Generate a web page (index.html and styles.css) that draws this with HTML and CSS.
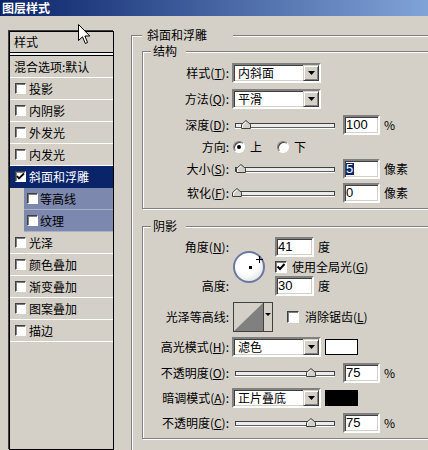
FILE: index.html
```html
<!DOCTYPE html>
<html lang="zh-CN">
<head>
<meta charset="utf-8">
<title>图层样式</title>
<link rel="stylesheet" href="styles.css">
</head>
<body>
<div class="titlebar">图层样式</div>
<div class="main">
  <div class="list">
    <div class="list-head">样式</div>
    <div class="list-sep"></div>
    <div class="item plain">混合选项:默认</div>
    <div class="item"><span class="cb"></span>投影</div>
    <div class="item"><span class="cb"></span>内阴影</div>
    <div class="item"><span class="cb"></span>外发光</div>
    <div class="item"><span class="cb"></span>内发光</div>
    <div class="item sel"><span class="cb"><svg class="tick" width="9" height="9" viewBox="0 0 9 9"><polyline points="1,4 3,6.5 8,1.5" fill="none" stroke="#000" stroke-width="1.8"/></svg></span>斜面和浮雕</div>
    <div class="item sub"><span class="cb"></span>等高线</div>
    <div class="item sub"><span class="cb"></span>纹理</div>
    <div class="item"><span class="cb"></span>光泽</div>
    <div class="item"><span class="cb"></span>颜色叠加</div>
    <div class="item"><span class="cb"></span>渐变叠加</div>
    <div class="item"><span class="cb"></span>图案叠加</div>
    <div class="item"><span class="cb"></span>描边</div>
  </div>

  <div class="group outer">
    <span class="gtitle">斜面和浮雕</span>

    <div class="group inner g1">
      <span class="gtitle">结构</span>
      <div class="row">
        <span class="lbl">样式(<u>T</u>):</span>
        <div class="select"><span class="val">内斜面</span><span class="ddbtn"><svg width="7" height="4" viewBox="0 0 7 4"><polygon points="0,0 7,0 3.5,4" fill="#000"/></svg></span></div>
      </div>
      <div class="row mt6">
        <span class="lbl">方法(<u>Q</u>):</span>
        <div class="select"><span class="val">平滑</span><span class="ddbtn"><svg width="7" height="4" viewBox="0 0 7 4"><polygon points="0,0 7,0 3.5,4" fill="#000"/></svg></span></div>
      </div>
      <div class="row mt6">
        <span class="lbl">深度(<u>D</u>):</span>
        <div class="slider"><div class="track"></div><svg class="thumb" style="left:9px" width="10" height="9" viewBox="0 0 10 9"><polygon points="0.5,8.5 0.5,4.5 5,0.5 9.5,4.5 9.5,8.5" fill="#d4d0c8" stroke="#404040"/><polyline points="1.5,8 1.5,5 5,2" fill="none" stroke="#fff"/></svg></div>
        <div class="num">100</div><span class="unit">%</span>
      </div>
      <div class="row dir">
        <span class="lbl">方向:</span>
        <span class="radio on"></span><span class="rtext">上</span>
        <span class="radio r2"></span><span class="rtext">下</span>
      </div>
      <div class="row">
        <span class="lbl">大小(<u>S</u>):</span>
        <div class="slider"><div class="track"></div><svg class="thumb" style="left:4px" width="10" height="9" viewBox="0 0 10 9"><polygon points="0.5,8.5 0.5,4.5 5,0.5 9.5,4.5 9.5,8.5" fill="#d4d0c8" stroke="#404040"/><polyline points="1.5,8 1.5,5 5,2" fill="none" stroke="#fff"/></svg></div>
        <div class="num"><span class="hl">5</span></div><span class="unit">像素</span>
      </div>
      <div class="row mt4">
        <span class="lbl">软化(<u>F</u>):</span>
        <div class="slider"><div class="track"></div><svg class="thumb" style="left:0px" width="10" height="9" viewBox="0 0 10 9"><polygon points="0.5,8.5 0.5,4.5 5,0.5 9.5,4.5 9.5,8.5" fill="#d4d0c8" stroke="#404040"/><polyline points="1.5,8 1.5,5 5,2" fill="none" stroke="#fff"/></svg></div>
        <div class="num">0</div><span class="unit">像素</span>
      </div>
    </div>

    <div class="group inner g2">
      <span class="gtitle">阴影</span>
      <div class="angle">
        <span class="alabel a1">角度(<u>N</u>):</span>
        <div class="dial">
          <span class="dot"></span>
          <svg class="cross" width="7" height="7" viewBox="0 0 7 7"><path d="M3.5 0V7M0 3.5H7" stroke="#000" stroke-width="1"/></svg>
        </div>
        <div class="ar r1"><div class="num wide">41</div><span class="unit">度</span></div>
        <div class="ar r2"><span class="cb big"><svg class="tick" width="10" height="10" viewBox="0 0 10 10"><polyline points="1.5,4.5 4,7 8.5,2" fill="none" stroke="#000" stroke-width="2"/></svg></span><span class="cbtext">使用全局光(<u>G</u>)</span></div>
        <span class="alabel a3">高度:</span>
        <div class="ar r3"><div class="num wide">30</div><span class="unit">度</span></div>
      </div>
      <div class="row contour mt6">
        <span class="lbl">光泽等高线:</span>
        <svg class="curve" width="40" height="30" viewBox="0 0 40 30">
          <rect x="0" y="0" width="40" height="30" fill="#404040"/>
          <rect x="1" y="1" width="29" height="28" fill="#d4d0c8"/>
          <polygon points="1,29 30,1 30,29" fill="#808080"/>
          <rect x="31" y="1" width="8" height="28" fill="#d4d0c8"/>
          <polygon points="32,11 38,11 35,14" fill="#000"/>
        </svg>
        <span class="cb big gap"></span><span class="cbtext">消除锯齿(<u>L</u>)</span>
      </div>
      <div class="row mt5">
        <span class="lbl">高光模式(<u>H</u>):</span>
        <div class="select"><span class="val">滤色</span><span class="ddbtn"><svg width="7" height="4" viewBox="0 0 7 4"><polygon points="0,0 7,0 3.5,4" fill="#000"/></svg></span></div>
        <span class="swatch white"></span>
      </div>
      <div class="row mt6">
        <span class="lbl">不透明度(<u>O</u>):</span>
        <div class="slider"><div class="track"></div><svg class="thumb" style="left:74px" width="10" height="9" viewBox="0 0 10 9"><polygon points="0.5,8.5 0.5,4.5 5,0.5 9.5,4.5 9.5,8.5" fill="#d4d0c8" stroke="#404040"/><polyline points="1.5,8 1.5,5 5,2" fill="none" stroke="#fff"/></svg></div>
        <div class="num">75</div><span class="unit">%</span>
      </div>
      <div class="row mt5">
        <span class="lbl">暗调模式(<u>A</u>):</span>
        <div class="select"><span class="val">正片叠底</span><span class="ddbtn"><svg width="7" height="4" viewBox="0 0 7 4"><polygon points="0,0 7,0 3.5,4" fill="#000"/></svg></span></div>
        <span class="swatch black"></span>
      </div>
      <div class="row mt5">
        <span class="lbl">不透明度(<u>C</u>):</span>
        <div class="slider"><div class="track"></div><svg class="thumb" style="left:74px" width="10" height="9" viewBox="0 0 10 9"><polygon points="0.5,8.5 0.5,4.5 5,0.5 9.5,4.5 9.5,8.5" fill="#d4d0c8" stroke="#404040"/><polyline points="1.5,8 1.5,5 5,2" fill="none" stroke="#fff"/></svg></div>
        <div class="num">75</div><span class="unit">%</span>
      </div>
    </div>
  </div>
</div>
<svg class="cursor" width="13" height="21" viewBox="0 0 13 21"><path d="M0.5 0.5 L0.5 16.5 L4.5 12.8 L7.3 19.5 L9.6 18.5 L6.9 12 L11.8 12 Z" fill="#fff" stroke="#000" stroke-width="1"/></svg>
</body>
</html>
```

FILE: styles.css
```css
* { box-sizing: border-box; }
html, body { margin: 0; padding: 0; }
body {
  width: 428px;
  height: 450px;
  overflow: hidden;
  position: relative;
  background: #d4d0c8;
  font-family: "Noto Sans CJK SC", "Liberation Sans", sans-serif;
  font-size: 12px;
  line-height: 14px;
  color: #000;
}
u { text-decoration: underline; text-underline-offset: 1px; }

.titlebar {
  height: 16px;
  line-height: 16px;
  padding-left: 2px;
  background: linear-gradient(to right, #0a246a, #80a3d8);
  color: #fff;
  font-weight: bold;
}

.main {
  display: flex;
  align-items: flex-start;
  padding-top: 15px;
}

/* left list */
.list {
  margin-left: 9px;
  width: 105px;
  height: 419px;
  flex: none;
  border: 1px solid #000;
  box-shadow: -1px -1px 0 #404040;
}
.list-head {
  height: 20px;
  padding-left: 4px;
  display: flex;
  align-items: center;
}
.list-sep {
  height: 4px;
  border-top: 1px solid #000;
  border-bottom: 1px solid #000;
  background: #f4f4f4;
}
.item {
  height: 22px;
  border-bottom: 1px solid #fff;
  display: flex;
  align-items: center;
  padding-left: 5px;
}
.item.plain { padding-left: 4px; }
.item.sel { background: #0a246a; color: #fff; border-bottom-color: #0a246a; }
.item.sub {
  margin-left: 14px;
  padding-left: 3px;
  background: #7d88ae;
  border-bottom-color: #a9b0c8;
}
.cb {
  position: relative;
  flex: none;
  width: 11px;
  height: 11px;
  margin-right: 3px;
  background: #fff;
  border: 1px solid;
  border-color: #404040 #fff #fff #404040;
  box-shadow: inset 1px 1px 0 #808080;
}
.item.sub .cb { margin-right: 2px; }
.cb .tick { position: absolute; left: 0; top: 0; }
.cb.big { width: 12px; height: 12px; margin-right: 0; }

/* groups (they run on past the right and bottom edges of the window) */
.group {
  position: relative;
  border: 1px solid #808080;
  border-right: none;
  box-shadow: inset 1px 1px 0 #fff, 1px 1px 0 #fff;
}
.gtitle {
  position: absolute;
  top: -8px;
  background: #d4d0c8;
  line-height: 14px;
  white-space: nowrap;
}
.outer {
  flex: 1;
  margin-left: 17px;
  margin-top: 4px;
  height: 415px;
  border-bottom: none;
}
.outer > .gtitle { left: 10px; padding: 0 26px 0 5px; }
.inner { margin-left: 10px; }
.inner > .gtitle { left: 8px; padding: 0 9px 0 2px; }
.g1 { margin-top: 15px; height: 158px; padding-top: 11px; }
.g2 { margin-top: 17px; height: 213px; padding-top: 10px; }

/* rows */
.row {
  display: flex;
  align-items: center;
  height: 20px;
}
.row.dir { height: 24px; }
.row.contour { height: 30px; }
.mt6 { margin-top: 6px; }
.mt5 { margin-top: 5px; }
.mt4 { margin-top: 4px; }
.lbl {
  flex: none;
  width: 86px;
  margin-right: 3px;
  text-align: right;
  white-space: nowrap;
}

.select {
  flex: none;
  width: 89px;
  height: 20px;
  display: flex;
  align-items: center;
  background: #fff;
  border: 2px solid;
  border-color: #808080 #fff #fff #808080;
  box-shadow: inset 1px 1px 0 #404040, inset -1px -1px 0 #d4d0c8;
}
.select .val { flex: 1; padding-left: 4px; white-space: nowrap; }
.ddbtn {
  flex: none;
  width: 16px;
  height: 16px;
  display: flex;
  align-items: center;
  justify-content: center;
  background: #d4d0c8;
  border: 1px solid;
  border-color: #d4d0c8 #404040 #404040 #d4d0c8;
  box-shadow: inset 1px 1px 0 #fff, inset -1px -1px 0 #808080;
}
.ddbtn svg { display: block; }

.num {
  flex: none;
  width: 37px;
  height: 20px;
  margin-left: 8px;
  padding-left: 1px;
  display: flex;
  align-items: center;
  background: #fff;
  border: 2px solid;
  border-color: #808080 #fff #fff #808080;
  box-shadow: inset 1px 1px 0 #404040, inset -1px -1px 0 #d4d0c8;
  font-family: "Liberation Sans", Arial, sans-serif;
  font-size: 13px;
}
.num.wide { width: 39px; margin-left: 0; }
.hl { background: #0a246a; color: #fff; padding-right: 1px; line-height: 12px; }
.unit { margin-left: 4px; white-space: nowrap; }

.slider {
  position: relative;
  flex: none;
  width: 103px;
  height: 20px;
}
.track {
  margin: 8px 0 0 3px;
  width: 100px;
  height: 5px;
  background: #ececec;
  border: 1px solid #404040;
  border-bottom-color: #606060;
  box-shadow: 0 1px 0 #fff;
}
.thumb { position: absolute; top: 5px; display: block; }

.radio {
  flex: none;
  position: relative;
  width: 12px;
  height: 12px;
  margin-left: 1px;
  border-radius: 50%;
  background: #fff;
  border: 1px solid;
  border-color: #808080 #fff #fff #808080;
  box-shadow: inset 1px 1px 0 #404040;
}
.radio.on::after {
  content: "";
  position: absolute;
  left: 3px;
  top: 3px;
  width: 4px;
  height: 4px;
  border-radius: 50%;
  background: #000;
}
.radio.r2 { margin-left: 15px; }
.rtext { margin-left: 5px; }

/* angle block */
.angle {
  display: grid;
  grid-template-columns: 89px 43px auto;
  grid-template-rows: 20px 19px 20px;
}
.alabel {
  grid-column: 1;
  align-self: center;
  text-align: right;
  padding-right: 3px;
  white-space: nowrap;
}
.a1 { grid-row: 1; }
.a3 { grid-row: 3; }
.dial {
  grid-column: 2;
  grid-row: 1 / 4;
  align-self: center;
  position: relative;
  width: 32px;
  height: 32px;
  margin-left: 1px;
  border-radius: 50%;
  border: 2px solid #6b78a2;
  background: radial-gradient(circle at 40% 35%, #ffffff 45%, #e4e4e4 80%, #cfcfcf 100%);
}
.dot {
  position: absolute;
  left: 14px;
  top: 13px;
  width: 3px;
  height: 3px;
  background: #000;
}
.cross { position: absolute; left: 21px; top: 3px; display: block; }
.ar { grid-column: 3; display: flex; align-items: center; }
.r1 { grid-row: 1; }
.r2 { grid-row: 2; }
.r3 { grid-row: 3; }
.cbtext { margin-left: 5px; white-space: nowrap; }

.curve { display: block; flex: none; margin-left: 1px; }
.cb.gap { margin-left: 14px; }
.contour .cbtext { margin-left: 6px; }

.swatch {
  flex: none;
  width: 33px;
  height: 16px;
  margin-left: 4px;
  border: 1px solid #000;
}
.swatch.white { background: #fff; }
.swatch.black { background: #000; }

.cursor { position: absolute; left: 78px; top: 24px; display: block; }
```
